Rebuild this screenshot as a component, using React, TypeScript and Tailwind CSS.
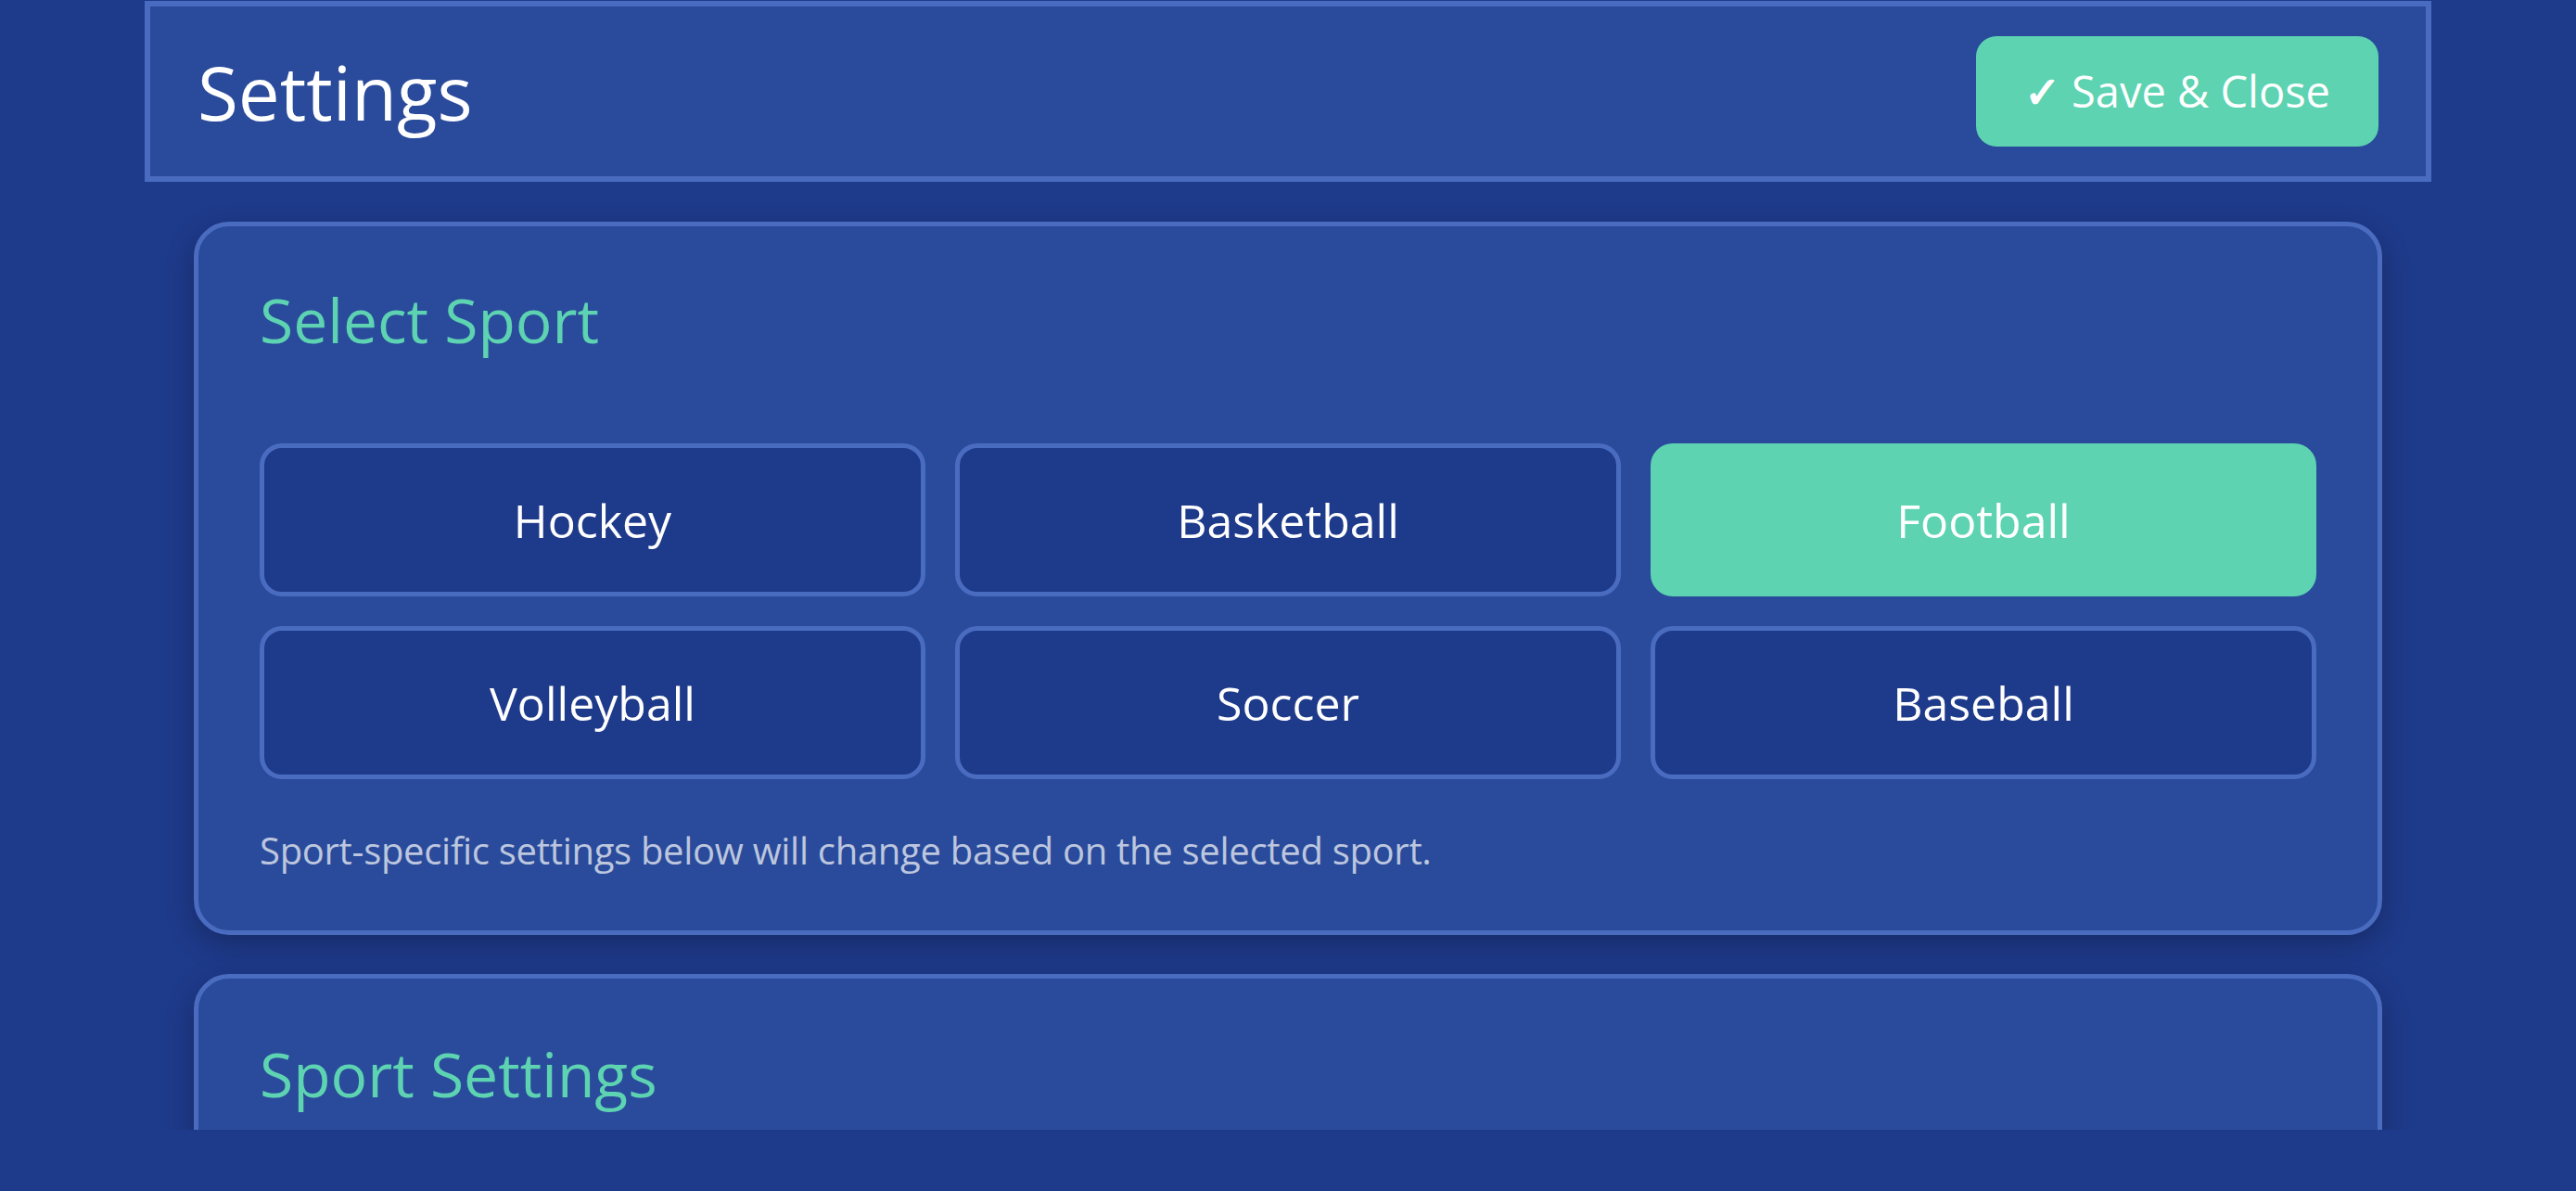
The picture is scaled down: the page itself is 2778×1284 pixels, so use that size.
import { useState } from "react"

const sports = ["Hockey", "Basketball", "Football", "Volleyball", "Soccer", "Baseball"]

function SportButton({ label, active, onClick }: { label: string; active: boolean; onClick: () => void }) {
  return (
    <button
      onClick={onClick}
      className={
        active
          ? "h-[165px] rounded-[24px] border-[5px] border-[#5dd3b2] bg-[#5dd3b2] text-[50px] leading-none text-white"
          : "h-[165px] rounded-[24px] border-[5px] border-[#4a6cc0] bg-[#1e3a8a] text-[50px] leading-none text-white"
      }
    >
      {label}
    </button>
  )
}

export default function App() {
  const [sport, setSport] = useState("Football")

  return (
    <div className="h-[1284px] w-[2778px] overflow-hidden bg-[#1e3a8a] font-['Open_Sans',sans-serif]">
      <div className="h-[1218px] overflow-hidden">
        <header className="mx-[156px] mt-[1px] flex h-[195px] items-center justify-between border-[6px] border-[#4a6cc0] bg-[#2a4b9b] px-[51px]">
          <h1 className="text-[80px] leading-none text-white">Settings</h1>
          <button className="flex h-[119px] items-center rounded-[22px] bg-[#5dd3b2] px-[52px] text-[47px] leading-none text-white">
            <span className="font-bold">✓</span>&nbsp;Save &amp; Close
          </button>
        </header>

        <div className="mx-[209px] flex flex-col gap-[42px] pt-[43px]">
          <section className="rounded-[38px] border-[5px] border-[#4a6cc0] bg-[#2a4b9b] px-[66px] pb-[66px] pt-[67px] shadow-[0_10px_30px_rgba(0,0,0,0.25)]">
            <h2 className="mb-[101px] text-[66px] leading-none text-[#5dd3b2]">Select Sport</h2>
            <div className="grid grid-cols-3 gap-[32px]">
              {sports.map((s) => (
                <SportButton key={s} label={s} active={s === sport} onClick={() => setSport(s)} />
              ))}
            </div>
            <p className="mt-[57px] text-[40px] leading-none tracking-[-0.3px] text-[#bcc6de]">
              Sport-specific settings below will change based on the selected sport.
            </p>
          </section>

          <section className="h-[600px] rounded-[38px] border-[5px] border-[#4a6cc0] bg-[#2a4b9b] px-[66px] pt-[69px] shadow-[0_10px_30px_rgba(0,0,0,0.25)]">
            <h2 className="text-[66px] leading-none text-[#5dd3b2]">Sport Settings</h2>
          </section>
        </div>
      </div>
    </div>
  )
}
